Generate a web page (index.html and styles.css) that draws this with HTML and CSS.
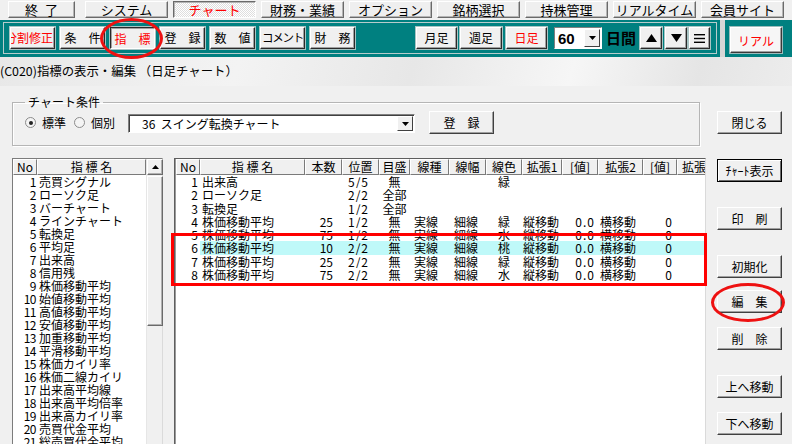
FILE: index.html
```html
<!DOCTYPE html>
<html lang="ja">
<head>
<meta charset="utf-8">
<title>指標の表示・編集</title>
<link rel="stylesheet" href="styles.css">
</head>
<body>
<div class="app">
  <nav class="menubar">
    <div class="mbtn first">終 了</div>
    <div class="mbtn">システム</div>
    <div class="mbtn active">チャート</div>
    <div class="mbtn">財務・業績</div>
    <div class="mbtn">オプション</div>
    <div class="mbtn">銘柄選択</div>
    <div class="mbtn">持株管理</div>
    <div class="mbtn">リアルタイム</div>
    <div class="mbtn">会員サイト</div>
  </nav>

  <div class="toolrow">
    <div class="toolbar">
      <div class="tb-inner">
        <div class="tgroup">
          <div class="tbtn red clip">分割修正</div>
          <div class="tbtn">条　件</div>
          <div class="tbtn red pressed">指　標</div>
          <div class="tbtn">登　録</div>
          <div class="tbtn">数　値</div>
          <div class="tbtn tight">コメント</div>
          <div class="tbtn">財　務</div>
        </div>
        <div class="tgroup right">
          <div class="tbtn w41">月足</div>
          <div class="tbtn w42 ml3">週足</div>
          <div class="tbtn w41 ml4 red">日足</div>
          <div class="combo">
            <span class="combo-val">60</span>
            <span class="combo-btn"><svg width="7" height="4" viewBox="0 0 7 4"><polygon points="0,0 7,0 3.5,4" fill="#000"/></svg></span>
          </div>
          <div class="days">日間</div>
          <div class="tbtn sq"><svg width="11" height="8" viewBox="0 0 11 8"><polygon points="0,8 11,8 5.5,0" fill="#000"/></svg></div>
          <div class="tbtn sq ml3"><svg width="11" height="8" viewBox="0 0 11 8"><polygon points="0,0 11,0 5.5,8" fill="#000"/></svg></div>
          <div class="tbtn sq sq21 ml2"><svg width="11" height="9" viewBox="0 0 11 9"><rect x="0" y="0" width="11" height="1.4" fill="#000"/><rect x="0" y="3.8" width="11" height="1.4" fill="#000"/><rect x="0" y="7.6" width="11" height="1.4" fill="#000"/></svg></div>
        </div>
      </div>
    </div>
    <div class="realpanel">
      <div class="realbtn">リアル</div>
    </div>
  </div>

  <div class="titlebar">(C020)指標の表示・編集 （日足チャート）</div>

  <div class="main">
    <div class="content">
      <fieldset class="group">
        <legend>チャート条件</legend>
        <div class="cond-row">
          <label class="radio"><span class="rdot on"></span>標準</label>
          <label class="radio"><span class="rdot"></span>個別</label>
          <div class="select">
            <span class="select-text">36&nbsp; スイング転換チャート</span>
            <span class="select-btn"><svg width="7" height="4" viewBox="0 0 7 4"><polygon points="0,0 7,0 3.5,4" fill="#000"/></svg></span>
          </div>
          <div class="sbtn reg">登　録</div>
        </div>
      </fieldset>

      <div class="lists">
        <div class="listbox">
          <div class="listbody">
            <div class="lhead">
              <div class="hcell lno">No</div>
              <div class="hcell lname">指 標 名</div>
            </div>
            <div class="lrow"><span class="lnum">1</span><span class="lname-t">売買シグナル</span></div>
            <div class="lrow"><span class="lnum">2</span><span class="lname-t">ローソク足</span></div>
            <div class="lrow"><span class="lnum">3</span><span class="lname-t">バーチャート</span></div>
            <div class="lrow"><span class="lnum">4</span><span class="lname-t">ラインチャート</span></div>
            <div class="lrow"><span class="lnum">5</span><span class="lname-t">転換足</span></div>
            <div class="lrow"><span class="lnum">6</span><span class="lname-t">平均足</span></div>
            <div class="lrow"><span class="lnum">7</span><span class="lname-t">出来高</span></div>
            <div class="lrow"><span class="lnum">8</span><span class="lname-t">信用残</span></div>
            <div class="lrow"><span class="lnum">9</span><span class="lname-t">株価移動平均</span></div>
            <div class="lrow"><span class="lnum">10</span><span class="lname-t">始値移動平均</span></div>
            <div class="lrow"><span class="lnum">11</span><span class="lname-t">高値移動平均</span></div>
            <div class="lrow"><span class="lnum">12</span><span class="lname-t">安値移動平均</span></div>
            <div class="lrow"><span class="lnum">13</span><span class="lname-t">加重移動平均</span></div>
            <div class="lrow"><span class="lnum">14</span><span class="lname-t">平滑移動平均</span></div>
            <div class="lrow"><span class="lnum">15</span><span class="lname-t">株価カイリ率</span></div>
            <div class="lrow"><span class="lnum">16</span><span class="lname-t">株価二線カイリ</span></div>
            <div class="lrow"><span class="lnum">17</span><span class="lname-t">出来高平均線</span></div>
            <div class="lrow"><span class="lnum">18</span><span class="lname-t">出来高平均倍率</span></div>
            <div class="lrow"><span class="lnum">19</span><span class="lname-t">出来高カイリ率</span></div>
            <div class="lrow"><span class="lnum">20</span><span class="lname-t">売買代金平均</span></div>
            <div class="lrow"><span class="lnum">21</span><span class="lname-t">総売買代金平均</span></div>
          </div>
          <div class="vscroll">
            <div class="sb-btn"><svg width="7" height="4" viewBox="0 0 7 4"><polygon points="0,4 7,4 3.5,0" fill="#000"/></svg></div>
            <div class="sb-thumb"></div>
          </div>
        </div>

        <div class="grid">
          <div class="hcell">No</div>
          <div class="hcell">指 標 名</div>
          <div class="hcell">本数</div>
          <div class="hcell">位置</div>
          <div class="hcell">目盛</div>
          <div class="hcell">線種</div>
          <div class="hcell">線幅</div>
          <div class="hcell">線色</div>
          <div class="hcell">拡張1</div>
          <div class="hcell">[値]</div>
          <div class="hcell">拡張2</div>
          <div class="hcell">[値]</div>
          <div class="hcell hlast">拡張3</div>

          <div class="c c-no">1</div><div class="c c-name">出来高</div><div class="c c-num"></div><div class="c c-pos">5/5</div><div class="c c-ctr">無</div><div class="c c-type"></div><div class="c c-wid"></div><div class="c c-ctr">緑</div><div class="c c-e1"></div><div class="c c-v1"></div><div class="c c-e2"></div><div class="c c-v2"></div><div class="c"></div>

          <div class="c c-no">2</div><div class="c c-name">ローソク足</div><div class="c c-num"></div><div class="c c-pos">2/2</div><div class="c c-ctr">全部</div><div class="c c-type"></div><div class="c c-wid"></div><div class="c c-ctr"></div><div class="c c-e1"></div><div class="c c-v1"></div><div class="c c-e2"></div><div class="c c-v2"></div><div class="c"></div>

          <div class="c c-no">3</div><div class="c c-name">転換足</div><div class="c c-num"></div><div class="c c-pos">1/2</div><div class="c c-ctr">全部</div><div class="c c-type"></div><div class="c c-wid"></div><div class="c c-ctr"></div><div class="c c-e1"></div><div class="c c-v1"></div><div class="c c-e2"></div><div class="c c-v2"></div><div class="c"></div>

          <div class="c c-no">4</div><div class="c c-name">株価移動平均</div><div class="c c-num">25</div><div class="c c-pos">1/2</div><div class="c c-ctr">無</div><div class="c c-type">実線</div><div class="c c-wid">細線</div><div class="c c-ctr">緑</div><div class="c c-e1">縦移動</div><div class="c c-v1">0.0</div><div class="c c-e2">横移動</div><div class="c c-v2">0</div><div class="c"></div>

          <div class="c c-no">5</div><div class="c c-name">株価移動平均</div><div class="c c-num">75</div><div class="c c-pos">1/2</div><div class="c c-ctr">無</div><div class="c c-type">実線</div><div class="c c-wid">細線</div><div class="c c-ctr">水</div><div class="c c-e1">縦移動</div><div class="c c-v1">0.0</div><div class="c c-e2">横移動</div><div class="c c-v2">0</div><div class="c"></div>

          <div class="c c-no">6</div><div class="c c-name sel">株価移動平均</div><div class="c c-num sel">10</div><div class="c c-pos sel">2/2</div><div class="c c-ctr sel">無</div><div class="c c-type sel">実線</div><div class="c c-wid sel">細線</div><div class="c c-ctr sel">桃</div><div class="c c-e1 sel">縦移動</div><div class="c c-v1 sel">0.0</div><div class="c c-e2 sel">横移動</div><div class="c c-v2 sel">0</div><div class="c sel"></div>

          <div class="c c-no">7</div><div class="c c-name">株価移動平均</div><div class="c c-num">25</div><div class="c c-pos">2/2</div><div class="c c-ctr">無</div><div class="c c-type">実線</div><div class="c c-wid">細線</div><div class="c c-ctr">緑</div><div class="c c-e1">縦移動</div><div class="c c-v1">0.0</div><div class="c c-e2">横移動</div><div class="c c-v2">0</div><div class="c"></div>

          <div class="c c-no">8</div><div class="c c-name">株価移動平均</div><div class="c c-num">75</div><div class="c c-pos">2/2</div><div class="c c-ctr">無</div><div class="c c-type">実線</div><div class="c c-wid">細線</div><div class="c c-ctr">水</div><div class="c c-e1">縦移動</div><div class="c c-v1">0.0</div><div class="c c-e2">横移動</div><div class="c c-v2">0</div><div class="c"></div>
        </div>
      </div>
    </div>

    <div class="side">
      <div class="sbtn s-close">閉じる</div>
      <div class="sbtn s-gap default">ﾁｬｰﾄ表示</div>
      <div class="sbtn s-gap">印　刷</div>
      <div class="sbtn s-gap">初期化</div>
      <div class="sbtn s-gap2">編　集</div>
      <div class="sbtn s-gap3">削　除</div>
      <div class="sbtn s-gap">上へ移動</div>
      <div class="sbtn s-gap3">下へ移動</div>
    </div>
  </div>

  <div class="mark-rect"></div>
  <div class="mark-ellipse e-ind"></div>
  <div class="mark-ellipse e-edit"></div>
</div>
</body>
</html>
```

FILE: styles.css
```css
* { box-sizing: border-box; }
html, body { margin: 0; padding: 0; }
body {
  width: 792px;
  height: 444px;
  overflow: hidden;
  background: #f0f0f0;
  font-family: "Noto Sans CJK JP", "Noto Sans", sans-serif;
  font-size: 12px;
  color: #000;
}
.app {
  position: relative;
  width: 792px;
  height: 444px;
  overflow: hidden;
}

/* top menu */
.menubar {
  display: flex;
  gap: 5px;
  height: 20px;
  padding: 1px 0 0 8px;
  background: #f0f0f0;
}
.mbtn {
  width: 83px;
  height: 17px;
  display: flex;
  align-items: center;
  justify-content: center;
  font-size: 13px;
  line-height: 1;
  white-space: pre;
  background: #efefef;
  border: 1px solid;
  border-color: #fff #6a6a6a #6a6a6a #fff;
  box-shadow: inset -1px -1px 0 #b4b4b4;
}
.mbtn.first { width: 67px; margin-right: 5px; word-spacing: 4px; }
.mbtn.active {
  color: #f00;
  border-color: #6a6a6a #fff #fff #6a6a6a;
  box-shadow: inset 1px 1px 0 #b4b4b4;
  background: repeating-conic-gradient(#fff 0 25%, #dedede 0 50%) 0 0 / 2px 2px;
}

/* toolbar */
.toolrow {
  display: flex;
  height: 37px;
  background: #d6d6d6;
}
.toolbar {
  width: 720px;
  background: #008080;
  padding: 2px 3px 3px 3px;
}
.tb-inner {
  height: 32px;
  border: 1px solid #b7cccc;
  display: flex;
  justify-content: space-between;
  align-items: flex-start;
  padding: 4px 6px 0 6px;
}
.tgroup { display: flex; gap: 5px; align-items: center; }
.tgroup.right { gap: 0; }
.tbtn {
  width: 45px;
  height: 22px;
  display: flex;
  align-items: center;
  justify-content: center;
  white-space: nowrap;
  overflow: hidden;
  font-size: 12px;
  line-height: 1;
  background: #f0f0f0;
  border: 1px solid;
  border-color: #fff #2a2a2a #2a2a2a #fff;
  box-shadow: inset -1px -1px 0 #a0a0a0, 0 0 0 1px #a8c4c4;
}
.tbtn.red { color: #f00; }
.tbtn.clip { justify-content: flex-end; padding-right: 1px; }
.tbtn.tight { letter-spacing: -1.2px; font-size: 11.5px; }
.tbtn.pressed {
  border-color: #2a2a2a #fff #fff #2a2a2a;
  box-shadow: inset 1px 1px 0 #a0a0a0, 0 0 0 1px #a8c4c4;
  padding-top: 1px;
}
.tbtn.w41 { width: 41px; }
.tbtn.w42 { width: 42px; }
.ml2 { margin-left: 2px; }
.ml3 { margin-left: 3px; }
.ml4 { margin-left: 4px; }
.tbtn.sq { width: 22px; }
.tbtn.sq21 { width: 21px; }

.combo {
  width: 48px;
  height: 22px;
  margin-left: 7px;
  background: #fff;
  border: 1px solid;
  border-color: #808080 #fff #fff #808080;
  display: flex;
  align-items: center;
  justify-content: space-between;
  padding: 1px;
}
.combo-val {
  font-family: "Liberation Sans", "Noto Sans", sans-serif;
  font-weight: bold;
  font-size: 15px;
  padding-left: 2px;
}
.combo-btn {
  width: 16px;
  height: 18px;
  display: flex;
  align-items: center;
  justify-content: center;
  background: #f0f0f0;
  border: 1px solid;
  border-color: #fff #404040 #404040 #fff;
}
.days {
  width: 38px;
  height: 22px;
  padding-left: 4px;
  font-size: 15px;
  font-weight: bold;
  line-height: 22px;
  color: #000;
}

.realpanel {
  width: 67px;
  margin-left: 5px;
  background: #008080;
  padding: 7px 0 0 5px;
}
.realbtn {
  width: 52px;
  height: 26px;
  display: flex;
  align-items: center;
  justify-content: center;
  color: #f00;
  font-size: 12px;
  background: #f6f6f6;
  border: 1px solid;
  border-color: #fff #3a3a3a #3a3a3a #fff;
  box-shadow: inset -1px -1px 0 #a0a0a0, 0 0 0 1px #9cbcbc;
}

/* title */
.titlebar {
  height: 29px;
  line-height: 29px;
  font-size: 12.4px;
  padding-left: 0;
  white-space: nowrap;
  background: linear-gradient(105deg, #e8e8e8 0%, #f3f3f3 30%, #e7e7e7 52%, #f6f6f6 72%, #e5e5e5 88%, #ececec 100%);
}

/* main */
.main { display: flex; }
.content { width: 706px; padding-left: 12px; }

.group {
  width: 688px;
  margin: 9px 0 0 0;
  padding: 2px 12px 11px 12px;
  border: 1px solid #b5b5b5;
  box-shadow: 1px 1px 0 #fff, inset 1px 1px 0 #fff;
  min-width: 0;
}
.group legend {
  padding: 0 3px;
  font-size: 12px;
  line-height: 14px;
  height: 14px;
}
.cond-row {
  display: flex;
  align-items: center;
  height: 23px;
}
.radio {
  display: flex;
  align-items: center;
  gap: 6px;
  margin-right: 8px;
  font-size: 12px;
}
.radio + .radio { margin-right: 13px; }
.rdot {
  width: 11px;
  height: 11px;
  border-radius: 50%;
  border: 1px solid #8c8c8c;
  background: #f4f4f4;
  display: flex;
  align-items: center;
  justify-content: center;
}
.rdot.on::after {
  content: "";
  width: 4px;
  height: 4px;
  border-radius: 50%;
  background: #222;
}
.select {
  width: 287px;
  height: 19px;
  background: #fff;
  border: 1px solid;
  border-color: #808080 #fff #fff #808080;
  box-shadow: inset 1px 1px 0 #404040;
  display: flex;
  align-items: center;
  justify-content: space-between;
  padding: 1px 1px 1px 13px;
  margin-top: 2px;
}
.select-text { font-size: 12px; white-space: pre; }
.select-btn {
  width: 16px;
  height: 15px;
  display: flex;
  align-items: center;
  justify-content: center;
  background: #f0f0f0;
  border: 1px solid;
  border-color: #fff #404040 #404040 #fff;
}

.sbtn {
  width: 65px;
  height: 23px;
  display: flex;
  align-items: center;
  justify-content: center;
  font-size: 12px;
  white-space: nowrap;
  background: #f0f0f0;
  border: 1px solid;
  border-color: #fff #404040 #404040 #fff;
  box-shadow: inset -1px -1px 0 #a0a0a0;
}
.sbtn.reg { margin-left: 14px; }
.sbtn.default {
  border-color: #000;
  box-shadow: inset 1px 1px 0 #fff, inset -1px -1px 0 #6a6a6a;
}

/* lists */
.lists {
  display: flex;
  gap: 11px;
  margin-top: 12px;
}
.listbox {
  width: 151px;
  height: 300px;
  display: flex;
  background: #fff;
  border: 1px solid;
  border-color: #7c7c7c #dadada #dadada #7c7c7c;
}
.listbody { width: 133px; overflow: hidden; }
.lhead { display: flex; height: 16px; }
.hcell {
  height: 16px;
  display: flex;
  align-items: center;
  justify-content: center;
  font-size: 12px;
  line-height: 1;
  white-space: nowrap;
  overflow: hidden;
  background: #f0f0f0;
  border: 1px solid;
  border-color: #fff #7a7a7a #7a7a7a #fff;
}
.lno { width: 24px; }
.lname { width: 109px; }
.lrow {
  display: flex;
  height: 13px;
  line-height: 13px;
  font-size: 12px;
  white-space: nowrap;
}
.lnum {
  width: 24px;
  text-align: right;
  padding-right: 1px;
  letter-spacing: -0.5px;
}
.lname-t { margin-left: 2px; }
.vscroll {
  width: 16px;
  background: #f0f0f0;
  border-left: 1px solid #e6e6e6;
}
.sb-btn, .sb-thumb {
  width: 16px;
  background: #f0f0f0;
  border: 1px solid;
  border-color: #fff #6a6a6a #6a6a6a #fff;
  box-shadow: inset -1px -1px 0 #b0b0b0;
}
.sb-btn {
  height: 16px;
  display: flex;
  align-items: center;
  justify-content: center;
}
.sb-thumb { height: 150px; margin-top: 1px; }

.grid {
  width: 532px;
  height: 300px;
  overflow: hidden;
  background: #fff;
  border: 1px solid;
  border-color: #5e5e5e #dadada #dadada #5e5e5e;
  box-shadow: inset 1px 0 0 #9a9a9a;
  padding-left: 1px;
  display: grid;
  grid-template-columns: 24px 105px 37px 37px 31px 39px 37px 36px 40px 36px 45px 34px 40px;
  grid-template-rows: 16px;
  grid-auto-rows: 13.3px;
  align-content: start;
}
.hlast { justify-content: flex-start; padding-left: 4px; }
.c {
  font-size: 12px;
  line-height: 13.3px;
  white-space: nowrap;
  overflow: hidden;
}
.c.sel { background: #bff9f9; }
.c-no { text-align: right; padding-right: 2px; }
.c-name { padding-left: 2px; }
.c-num { text-align: right; padding-right: 9px; }
.c-pos { text-align: center; padding-right: 4px; letter-spacing: 1px; }
.c-ctr { text-align: center; }
.c-type { padding-left: 4px; }
.c-wid { padding-left: 5px; }
.c-e1 { padding-left: 1px; }
.c-v1 { text-align: right; padding-right: 3px; letter-spacing: 1px; }
.c-e2 { padding-left: 2px; }
.c-v2 { text-align: right; padding-right: 5px; }

/* side buttons */
.side {
  width: 65px;
  margin-left: 11px;
  display: flex;
  flex-direction: column;
}
.s-close { margin-top: 25px; }
.s-gap { margin-top: 25px; }
.s-gap2 { margin-top: 12px; }
.s-gap3 { margin-top: 14px; }

/* annotations */
.mark-rect {
  position: absolute;
  left: 171px;
  top: 233px;
  width: 536px;
  height: 53px;
  border: 3px solid #f00;
}
.mark-ellipse {
  position: absolute;
  border: 3px solid #ee1111;
  border-radius: 50%;
}
.e-ind { left: 100px; top: 18px; width: 63px; height: 41px; }
.e-edit { left: 711px; top: 283px; width: 74px; height: 39px; }
```
